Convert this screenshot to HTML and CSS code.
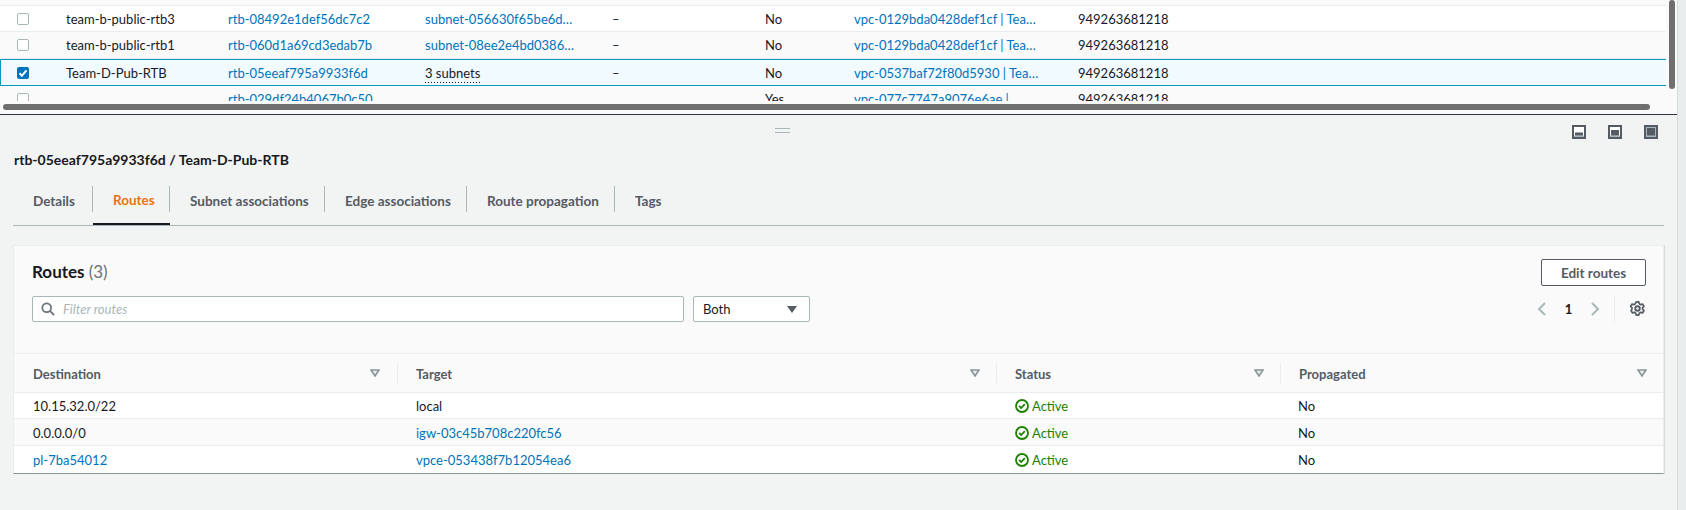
FILE: index.html
```html
<!DOCTYPE html>
<html lang="en">
<head>
    <meta charset="UTF-8">
    <meta name="viewport" content="width=device-width, initial-scale=1.0">
    <title>Route tables</title>
    <link rel="stylesheet" href="styles.css">
</head>
<body>
<div class="page">
    <div class="main">
        <div class="top-pane">
            <div class="rtb-rows">
                <div class="rtb-row rtb-row-cut"></div>
                <div class="rtb-row first">
                    <span><i class="check"></i></span>
                    <span>team-b-public-rtb3</span>
                    <a>rtb-08492e1def56dc7c2</a>
                    <a>subnet-056630f65be6d…</a>
                    <span>–</span>
                    <span>No</span>
                    <a>vpc-0129bda0428def1cf | Tea…</a>
                    <span>949263681218</span>
                </div>
                <div class="rtb-row striped">
                    <span><i class="check"></i></span>
                    <span>team-b-public-rtb1</span>
                    <a>rtb-060d1a69cd3edab7b</a>
                    <a>subnet-08ee2e4bd0386…</a>
                    <span>–</span>
                    <span>No</span>
                    <a>vpc-0129bda0428def1cf | Tea…</a>
                    <span>949263681218</span>
                </div>
                <div class="rtb-row selected">
                    <span>
                        <i class="check checked">
                            <svg viewBox="0 0 12 12" width="12" height="12"><path d="M2.5 6.2l2.4 2.5 4.6-5.4" fill="none" stroke="#fff" stroke-width="2"/></svg>
                        </i>
                    </span>
                    <span>Team-D-Pub-RTB</span>
                    <a>rtb-05eeaf795a9933f6d</a>
                    <span><span class="dotted">3 subnets</span></span>
                    <span>–</span>
                    <span>No</span>
                    <a>vpc-0537baf72f80d5930 | Tea…</a>
                    <span>949263681218</span>
                </div>
                <div class="rtb-row striped">
                    <span><i class="check"></i></span>
                    <span></span>
                    <a>rtb-029df24b4067b0c50</a>
                    <span></span>
                    <span></span>
                    <span>Yes</span>
                    <a>vpc-077c7747a9076e6ae |</a>
                    <span>949263681218</span>
                </div>
            </div>
            <div class="scroll-x"></div>
            <div class="scroll-y"></div>
        </div>

        <div class="bottom-pane">
            <div class="pane-tools">
                <div class="drag-handle"></div>
                <svg class="pane-icon" viewBox="0 0 14 14"><rect x="1" y="1" width="12" height="12" fill="#fff" stroke="#545b64" stroke-width="2"/><rect x="2" y="10.500" width="10" height="1.500" fill="#aab7b8"/><rect x="3" y="7.500" width="8" height="3" fill="#545b64"/></svg>
                <svg class="pane-icon" viewBox="0 0 14 14"><rect x="1" y="1" width="12" height="12" fill="#fff" stroke="#545b64" stroke-width="2"/><rect x="2" y="10.500" width="10" height="1.500" fill="#aab7b8"/><rect x="3" y="5" width="8" height="5.500" fill="#545b64"/></svg>
                <svg class="pane-icon" viewBox="0 0 14 14"><rect x="1" y="1" width="12" height="12" fill="#aab7b8" stroke="#545b64" stroke-width="2"/><rect x="3" y="3" width="8" height="7.500" fill="#545b64"/></svg>
            </div>
            <h2 class="detail-title">rtb-05eeaf795a9933f6d / Team-D-Pub-RTB</h2>
            <div class="tabs">
                <div class="tab tab-details"><span>Details</span></div>
                <div class="tab tab-routes active"><span>Routes</span></div>
                <div class="tab tab-subnet"><span>Subnet associations</span></div>
                <div class="tab tab-edge"><span>Edge associations</span></div>
                <div class="tab tab-prop"><span>Route propagation</span></div>
                <div class="tab tab-tags"><span>Tags</span></div>
            </div>

            <div class="card">
                <div class="card-head">
                    <div class="card-left">
                        <h3 class="card-title">Routes <span class="count">(3)</span></h3>
                        <div class="filters">
                            <div class="search">
                                <svg viewBox="0 0 16 16" width="14" height="14"><circle cx="6.500" cy="6.500" r="5" fill="none" stroke="#687078" stroke-width="2"/><path d="M10.500 10.500l4.500 4.500" stroke="#687078" stroke-width="2"/></svg>
                                <span class="placeholder">Filter routes</span>
                            </div>
                            <div class="select">
                                <span>Both</span>
                                <svg viewBox="0 0 10 7" width="10" height="7"><path d="M0 0h10L5 7z" fill="#545b64"/></svg>
                            </div>
                        </div>
                    </div>
                    <div class="card-right">
                        <button class="btn">Edit routes</button>
                        <div class="pager">
                            <svg class="chev" viewBox="0 0 9 14"><path d="M8 1L2 7l6 6" fill="none" stroke="#aab7b8" stroke-width="2"/></svg>
                            <span class="page-no">1</span>
                            <svg class="chev" viewBox="0 0 9 14"><path d="M1 1l6 6-6 6" fill="none" stroke="#aab7b8" stroke-width="2"/></svg>
                            <div class="pager-sep">
                                <svg viewBox="0 0 16 16" width="15" height="15"><circle cx="8" cy="8" r="2.400" fill="none" stroke="#545b64" stroke-width="2"/><path d="M6.600 1h2.800l.5 2 1.600.9 2-.6 1.400 2.400-1.500 1.400v1.800l1.500 1.400-1.400 2.400-2-.6-1.600.9-.5 2H6.600l-.5-2-1.600-.9-2 .6-1.400-2.400L2.100 8.900V7.100L.6 5.700 2 3.300l2 .6 1.600-.9z" fill="none" stroke="#545b64" stroke-width="1.800" stroke-linejoin="round"/></svg>
                            </div>
                        </div>
                    </div>
                </div>

                <div class="route-row route-header">
                    <div class="th"><span>Destination</span><svg class="sort" viewBox="0 0 10 8"><path d="M1 1h8L5 7z" fill="#eaeded" stroke="#879596" stroke-width="1.600"/></svg></div>
                    <div class="th"><span>Target</span><svg class="sort" viewBox="0 0 10 8"><path d="M1 1h8L5 7z" fill="#eaeded" stroke="#879596" stroke-width="1.600"/></svg></div>
                    <div class="th"><span>Status</span><svg class="sort" viewBox="0 0 10 8"><path d="M1 1h8L5 7z" fill="#eaeded" stroke="#879596" stroke-width="1.600"/></svg></div>
                    <div class="th"><span>Propagated</span><svg class="sort" viewBox="0 0 10 8"><path d="M1 1h8L5 7z" fill="#eaeded" stroke="#879596" stroke-width="1.600"/></svg></div>
                </div>
                <div class="route-row first">
                    <span>10.15.32.0/22</span>
                    <span>local</span>
                    <span class="active-status"><svg viewBox="0 0 14 14" width="14" height="14"><circle cx="7" cy="7" r="6" fill="none" stroke="#1d8102" stroke-width="1.800"/><path d="M4.200 7l2 2 3.600-3.800" fill="none" stroke="#1d8102" stroke-width="1.800"/></svg>Active</span>
                    <span>No</span>
                </div>
                <div class="route-row striped">
                    <span>0.0.0.0/0</span>
                    <a>igw-03c45b708c220fc56</a>
                    <span class="active-status"><svg viewBox="0 0 14 14" width="14" height="14"><circle cx="7" cy="7" r="6" fill="none" stroke="#1d8102" stroke-width="1.800"/><path d="M4.200 7l2 2 3.600-3.800" fill="none" stroke="#1d8102" stroke-width="1.800"/></svg>Active</span>
                    <span>No</span>
                </div>
                <div class="route-row">
                    <a>pl-7ba54012</a>
                    <a>vpce-053438f7b12054ea6</a>
                    <span class="active-status"><svg viewBox="0 0 14 14" width="14" height="14"><circle cx="7" cy="7" r="6" fill="none" stroke="#1d8102" stroke-width="1.800"/><path d="M4.200 7l2 2 3.600-3.800" fill="none" stroke="#1d8102" stroke-width="1.800"/></svg>Active</span>
                    <span>No</span>
                </div>
            </div>
        </div>
    </div>
    <div class="side-strip"></div>
</div>
</body>
</html>
```

FILE: styles.css
```css
* {
    box-sizing: border-box;
}
body {
    margin: 0;
    font-family: Lato, "Noto Sans", sans-serif;
    font-size: 13px;
    color: #16191f;
    background-color: #f2f3f3;
}
a {
    color: #0073bb;
}
.page {
    display: flex;
    width: 1686px;
    height: 510px;
    overflow: hidden;
}
.main {
    width: 1677px;
}
.side-strip {
    width: 9px;
    background-color: #eaeded;
    border-left: 1px solid #d5dbdb;
}

/* top table, cut off by the split pane */
.top-pane {
    position: relative;
    height: 115px;
    padding-bottom: 12px;
    background-color: #fafafa;
    border-bottom: 1px solid #2a343f;
}
.rtb-rows {
    width: 1666px;
    height: 101px;
    overflow: hidden;
}
.rtb-row {
    display: grid;
    grid-template-columns: 66px 162px 197px 187px 153px 89px 224px 1fr;
    align-items: center;
    height: 27px;
    background-color: #fff;
    border-bottom: 1px solid #eaeded;
}
.rtb-row.first {
    height: 26px;
}
.rtb-row-cut {
    height: 6px;
    background-color: #fafafa;
}
.rtb-row > span:first-child {
    padding-left: 17px;
    display: flex;
}
.rtb-row.striped {
    background-color: #fafafa;
}
.rtb-row.selected {
    background-color: #f1faff;
    border-bottom: 0;
    box-shadow: inset 1px 0 0 #0a97bf, inset 0 1px 0 #0a97bf, inset 0 -1px 0 #0a97bf;
}
.check {
    display: block;
    width: 12px;
    height: 12px;
    background-color: #fff;
    border: 1px solid #aab7b8;
    border-radius: 2px;
}
.checked {
    background-color: #0073bb;
    border: 0;
}
.checked svg {
    display: block;
}
.dotted {
    padding-bottom: 2px;
    background: repeating-linear-gradient(90deg, #16191f 0 1.5px, transparent 1.5px 3px) left bottom / 100% 1px no-repeat;
}
.scroll-x {
    position: absolute;
    left: 3px;
    top: 104px;
    width: 1647px;
    height: 6px;
    background-color: #6f6f6f;
    border-radius: 3px;
}
.scroll-y {
    position: absolute;
    left: 1669px;
    top: 0;
    width: 6px;
    height: 89px;
    background-color: #6f6f6f;
    border-radius: 3px;
}

/* bottom split panel */
.pane-tools {
    position: relative;
    display: flex;
    justify-content: flex-end;
    gap: 22px;
    height: 37px;
    padding: 10px 19px 0 0;
}
.pane-icon {
    width: 14px;
    height: 14px;
}
.drag-handle {
    position: absolute;
    left: 775px;
    top: 13px;
    width: 15px;
    height: 5px;
    border-top: 1px solid #aab7b8;
    border-bottom: 1px solid #aab7b8;
}
.detail-title {
    margin: 0;
    padding-left: 14px;
    font-size: 14px;
    font-weight: 700;
    line-height: 16px;
}
.tabs {
    display: flex;
    height: 58px;
    margin: 0 13px;
    padding-top: 15px;
    border-bottom: 1px solid #aab7b8;
    color: #545b64;
    font-size: 13.5px;
    font-weight: 700;
}
.tab {
    display: flex;
    align-items: center;
    height: 42px;
    padding-left: 20px;
    position: relative;
}
.tab span {
    display: block;
    height: 26px;
    line-height: 26px;
    margin-top: -6px;
}
.tab::after {
    content: "";
    position: absolute;
    right: 0;
    top: 3px;
    height: 26px;
    border-right: 1px solid #aab7b8;
}
.tab-details {
    width: 80px;
}
.tab-routes {
    width: 77px;
}
.tab-subnet {
    width: 155px;
}
.tab-edge {
    width: 142px;
}
.tab-prop {
    width: 148px;
}
.tab-tags::after {
    display: none;
}
.active {
    color: #ec7211;
    border-bottom: 2px solid #16191f;
}

.card {
    width: 1651px;
    margin: 19px 0 0 13px;
    background-color: #fafafa;
    border: 1px solid #eaeded;
    border-bottom-color: #879596;
    box-shadow: 1px 0 0 #d5dbdb;
}
.card-head {
    display: flex;
    justify-content: space-between;
    height: 107px;
    padding: 13px 17px 0 18px;
}
.card-title {
    margin: 0 0 11px;
    font-size: 17px;
    font-weight: 700;
    line-height: 26px;
}
.count {
    color: #687078;
    font-weight: 400;
}
.filters {
    display: flex;
    gap: 9px;
}
.search {
    display: flex;
    align-items: center;
    gap: 8px;
    width: 652px;
    height: 26px;
    padding-left: 8px;
    background-color: #fff;
    border: 1px solid #aab7b8;
    border-radius: 2px;
}
.placeholder {
    color: #aab7b8;
    font-style: italic;
}
.select {
    display: flex;
    align-items: center;
    justify-content: space-between;
    width: 117px;
    height: 26px;
    padding: 0 12px 0 9px;
    background-color: #fff;
    border: 1px solid #aab7b8;
    border-radius: 2px;
}
.card-right {
    display: flex;
    flex-direction: column;
    align-items: flex-end;
}
.btn {
    width: 105px;
    height: 27px;
    padding: 0;
    background-color: #fff;
    border: 1px solid #545b64;
    border-radius: 2px;
    color: #545b64;
    font-family: inherit;
    font-size: 13.5px;
    font-weight: 700;
}
.pager {
    display: flex;
    align-items: center;
    width: 125px;
    margin: 9px -16px 0 0;
    height: 27px;
}
.chev {
    width: 9px;
    height: 14px;
}
.page-no {
    width: 45px;
    text-align: center;
    font-weight: 700;
}
.pager-sep {
    display: flex;
    align-items: center;
    height: 27px;
    margin-left: 14px;
    padding-left: 15px;
    border-left: 1px solid #eaeded;
}

.route-row {
    display: grid;
    grid-template-columns: 383px 600px 282px 1fr;
    align-items: center;
    height: 27px;
    padding-left: 19px;
    background-color: #fff;
    border-bottom: 1px solid #eaeded;
}
.route-row.first {
    height: 26px;
}
.route-row.first, .route-row.striped {
    padding-top: 1px;
}
.route-row.striped {
    background-color: #fafafa;
}
.route-row:last-child {
    border-bottom: 0;
}
.route-header {
    height: 40px;
    padding-left: 0;
    background-color: #fafafa;
    border-top: 1px solid #eaeded;
    color: #545b64;
    font-weight: 700;
    grid-template-columns: 384px 599px 284px 1fr;
}
.th {
    display: flex;
    align-items: center;
    justify-content: space-between;
    height: 19px;
    padding: 0 16px 0 18px;
    border-right: 1px solid #eaeded;
}
.th:first-child {
    padding: 0 17px 0 19px;
}
.th:last-child {
    border-right: 0;
}
.th span {
    padding-top: 1px;
}
.sort {
    width: 10px;
    height: 8px;
}
.active-status {
    display: flex;
    align-items: center;
    gap: 3px;
    margin-left: -1px;
    color: #1d8102;
}
```
